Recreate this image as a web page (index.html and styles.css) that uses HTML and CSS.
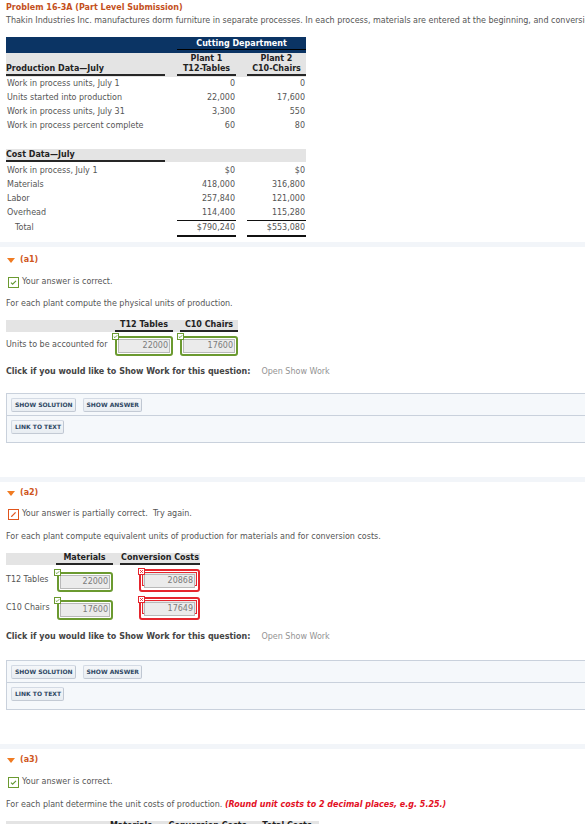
FILE: index.html
```html
<!DOCTYPE html>
<html>
<head>
<meta charset="utf-8">
<link rel="stylesheet" href="styles.css">
</head>
<body>
<div class="page">
  <div class="title">Problem 16-3A (Part Level Submission)</div>
  <div class="desc">Thakin Industries Inc. manufactures dorm furniture in separate processes. In each process, materials are entered at the beginning, and conversion costs are incurred uniformly. Production and cost data for the first month of operations are as follows.</div>

  <div class="data">
    <div class="r navy"><div class="dept">Cutting Department</div></div>
    <div class="r hdr">
      <div class="u b">Production Data—July</div><div></div>
      <div class="u b ctr">Plant 1<br>T12-Tables</div><div></div>
      <div class="u b ctr">Plant 2<br>C10-Chairs</div>
    </div>
    <div class="r row"><div>Work in process units, July 1</div><div></div><div class="num">0</div><div></div><div class="num">0</div></div>
    <div class="r row"><div>Units started into production</div><div></div><div class="num">22,000</div><div></div><div class="num">17,600</div></div>
    <div class="r row"><div>Work in process units, July 31</div><div></div><div class="num">3,300</div><div></div><div class="num">550</div></div>
    <div class="r row"><div>Work in process percent complete</div><div></div><div class="num">60</div><div></div><div class="num">80</div></div>

    <div class="r hdr2">
      <div class="u b">Cost Data—July</div><div></div><div></div><div></div><div></div>
    </div>
    <div class="r row"><div>Work in process, July 1</div><div></div><div class="num">$0</div><div></div><div class="num">$0</div></div>
    <div class="r row"><div>Materials</div><div></div><div class="num">418,000</div><div></div><div class="num">316,800</div></div>
    <div class="r row"><div>Labor</div><div></div><div class="num">257,840</div><div></div><div class="num">121,000</div></div>
    <div class="r row"><div>Overhead</div><div></div><div class="num">114,400</div><div></div><div class="num">115,280</div></div>
    <div class="r row total"><div class="tl">Total</div><div class="tl"></div><div class="num">$790,240</div><div class="tl"></div><div class="num">$553,080</div></div>
  </div>

  <div class="sep s1"></div>

  <!-- a1 -->
  <div class="part p1"><span class="tri"></span>(a1)</div>
  <div class="status st1">
    <svg class="ico" width="11" height="11" viewBox="0 0 11 11"><rect x="0.5" y="0.5" width="10" height="10" fill="#fff" stroke="#6b9a30"/><path d="M3 5.7 L4.6 7.2 L8 3.9" fill="none" stroke="#5f9630" stroke-width="1.1"/></svg>
    <span>Your answer is correct.</span>
  </div>
  <div class="prompt pr1">For each plant compute the physical units of production.</div>

  <div class="ans a1">
    <div class="ahdr g1">
      <div></div><div class="u b ctr">T12 Tables</div><div></div><div class="u b ctr">C10 Chairs</div>
    </div>
    <div class="arow g1 r1">
      <div class="alab">Units to be accounted for</div>
      <div class="inp ok w58"><svg class="mini" width="7" height="7" viewBox="0 0 7 7"><rect x="0.5" y="0.5" width="6" height="6" fill="#fff" stroke="#6b9a30"/><path d="M1.8 3.6 L2.9 4.6 L5.2 2.3" fill="none" stroke="#5f9630" stroke-width="0.9"/></svg><span>22000</span></div>
      <div></div>
      <div class="inp ok w58"><svg class="mini" width="7" height="7" viewBox="0 0 7 7"><rect x="0.5" y="0.5" width="6" height="6" fill="#fff" stroke="#6b9a30"/><path d="M1.8 3.6 L2.9 4.6 L5.2 2.3" fill="none" stroke="#5f9630" stroke-width="0.9"/></svg><span>17600</span></div>
    </div>
  </div>
  <div class="click c1"><b>Click if you would like to Show Work for this question:</b><span class="open">Open Show Work</span></div>

  <div class="box b1">
    <div class="brow top"><span class="btn">SHOW SOLUTION</span><span class="btn">SHOW ANSWER</span></div>
    <div class="brow bot"><span class="btn">LINK TO TEXT</span></div>
  </div>

  <div class="sep s2"></div>

  <!-- a2 -->
  <div class="part p2"><span class="tri"></span>(a2)</div>
  <div class="status st2">
    <svg class="ico" width="11" height="11" viewBox="0 0 11 11"><rect x="0.5" y="0.5" width="10" height="10" fill="#fff" stroke="#e0541c"/><path d="M3.4 7.6 L7.6 3.4" fill="none" stroke="#e0541c" stroke-width="1.3"/><path d="M3 8 L3.4 6.8 L4.2 7.6 Z" fill="#e0541c"/></svg>
    <span>Your answer is partially correct.&nbsp; Try again.</span>
  </div>
  <div class="prompt pr2">For each plant compute equivalent units of production for materials and for conversion costs.</div>

  <div class="ans a2">
    <div class="ahdr g2">
      <div></div><div class="u b ctr">Materials</div><div></div><div class="u b ctr">Conversion Costs</div>
    </div>
    <div class="arow g2 r2">
      <div class="alab2">T12 Tables</div>
      <div class="inp ok w56"><svg class="mini" width="7" height="7" viewBox="0 0 7 7"><rect x="0.5" y="0.5" width="6" height="6" fill="#fff" stroke="#6b9a30"/><path d="M1.8 3.6 L2.9 4.6 L5.2 2.3" fill="none" stroke="#5f9630" stroke-width="0.9"/></svg><span>22000</span></div>
      <div></div>
      <div class="inp bad"><svg class="mini" width="7" height="7" viewBox="0 0 7 7"><rect x="0.5" y="0.5" width="6" height="6" fill="#fff" stroke="#e5262e"/><path d="M2.2 2.2 L4.8 4.8 M4.8 2.2 L2.2 4.8" fill="none" stroke="#e5262e" stroke-width="1"/></svg><span class="in2"><span>20868</span></span></div>
    </div>
    <div class="arow g2 r2">
      <div class="alab2">C10 Chairs</div>
      <div class="inp ok w56"><svg class="mini" width="7" height="7" viewBox="0 0 7 7"><rect x="0.5" y="0.5" width="6" height="6" fill="#fff" stroke="#6b9a30"/><path d="M1.8 3.6 L2.9 4.6 L5.2 2.3" fill="none" stroke="#5f9630" stroke-width="0.9"/></svg><span>17600</span></div>
      <div></div>
      <div class="inp bad"><svg class="mini" width="7" height="7" viewBox="0 0 7 7"><rect x="0.5" y="0.5" width="6" height="6" fill="#fff" stroke="#e5262e"/><path d="M2.2 2.2 L4.8 4.8 M4.8 2.2 L2.2 4.8" fill="none" stroke="#e5262e" stroke-width="1"/></svg><span class="in2"><span>17649</span></span></div>
    </div>
  </div>
  <div class="click c2"><b>Click if you would like to Show Work for this question:</b><span class="open">Open Show Work</span></div>

  <div class="box">
    <div class="brow top"><span class="btn">SHOW SOLUTION</span><span class="btn">SHOW ANSWER</span></div>
    <div class="brow bot"><span class="btn">LINK TO TEXT</span></div>
  </div>

  <div class="sep s2"></div>

  <!-- a3 -->
  <div class="part p1"><span class="tri"></span>(a3)</div>
  <div class="status st1">
    <svg class="ico" width="11" height="11" viewBox="0 0 11 11"><rect x="0.5" y="0.5" width="10" height="10" fill="#fff" stroke="#6b9a30"/><path d="M3 5.7 L4.6 7.2 L8 3.9" fill="none" stroke="#5f9630" stroke-width="1.1"/></svg>
    <span>Your answer is correct.</span>
  </div>
  <div class="prompt pr2">For each plant determine the unit costs of production. <em class="note">(Round unit costs to 2 decimal places, e.g. 5.25.)</em></div>

  <div class="ans a3">
    <div class="ahdr g3">
      <div></div><div class="u b ctr">Materials</div><div></div><div class="u b ctr">Conversion Costs</div><div></div><div class="u b ctr">Total Costs</div>
    </div>
    <div class="arow g3 r2">
      <div class="alab2">T12 Tables</div><div></div><div></div><div></div><div></div><div></div>
    </div>
  </div>
</div>
</body>
</html>
```

FILE: styles.css
```css
html, body {
  margin: 0;
  padding: 0;
  overflow: hidden;
  background: #fff;
}
body {
  font-family: "DejaVu Sans", Verdana, sans-serif;
  font-size: 8px;
  color: #555;
}
.page {
  width: 820px;
  padding: 2px 6px 0;
}
.b { font-weight: bold; color: #222; }
.ctr { text-align: center; }

.title {
  line-height: 12px;
  font-weight: bold;
  color: #c4501c;
}
.desc {
  margin-top: 1px;
  line-height: 12px;
  white-space: nowrap;
  color: #555;
}

/* data table */
.data {
  margin-top: 10px;
  width: 300px;
}
.r {
  display: grid;
  grid-template-columns: 159px 12px 59px 11px 59px;
}
.navy {
  background: #0b3464;
  height: 16px;
}
.dept {
  grid-column: 3 / 6;
  padding-top: 1px;
  line-height: 11px;
  text-align: center;
  font-weight: bold;
  color: #fff;
  border-bottom: 1px solid #000;
  align-self: start;
}
.hdr {
  background: #e4e4e4;
  padding: 1px 0 1px;
  align-items: end;
}
.hdr > div, .hdr2 > div { line-height: 10px; }
.u { border-bottom: 2px solid #262626; }
.hdr2 {
  background: #e4e4e4;
  padding-top: 1px;
  margin-top: 16px;
  align-items: end;
}
.hdr2 + .row { margin-top: 2px; }
.row > div {
  line-height: 14px;
  white-space: nowrap;
}
.row > div:first-child { padding-left: 1px; }
.num { text-align: right; padding-right: 1px; }
.total > div {
  border-top: 1px solid #111;
  border-bottom: 2px solid #111;
}
.total > .tl { border-color: transparent; }
.total > .tl:first-child { padding-left: 9px; }

/* separators */
.sep {
  margin: 5px -6px 0;
  height: 5px;
  background: #f2f5f9;
}
.s2 { margin-top: 34px; }

.part {
  margin-top: 5px;
  line-height: 12px;
  font-weight: bold;
  color: #cf561c;
  display: flex;
  align-items: center;
  gap: 5px;
}
.s1 + .part { margin-top: 7px; }
.tri {
  margin-left: 1px;
  width: 0;
  height: 0;
  border-left: 4px solid transparent;
  border-right: 4px solid transparent;
  border-top: 5px solid #f07b22;
}

.status {
  display: flex;
  align-items: center;
  gap: 3px;
  line-height: 12px;
  padding-left: 2px;
  color: #555;
}
.st1 { margin-top: 10px; }
.st2 { margin-top: 9px; }
.ico { display: block; }

.prompt { line-height: 12px; white-space: nowrap; }
.pr1 { margin-top: 10px; }
.pr2 { margin-top: 11px; }
.note { color: #e3101f; font-weight: bold; }

/* answer grids */
.ans { margin-top: 10px; }
.a2, .a3 { margin-top: 10px; }
.ahdr {
  display: grid;
  background: #e4e4e4;
  align-items: end;
}
.ahdr > div { line-height: 10px; }
.arow { display: grid; }
.g1 { grid-template-columns: 109px 58px 7px 58px; width: 232px; }
.g2 { grid-template-columns: 50px 57px 7px 80px; width: 194px; }
.g3 { grid-template-columns: 96px 58px 7px 81px 7px 64px; width: 313px; }

.r1 { height: 26px; }
.r1 .inp { margin-top: 4px; align-self: start; }
.alab { padding-top: 7px; line-height: 12px; white-space: nowrap; }
.r2 { height: 28px; align-items: end; }
.r2 .inp { margin-bottom: 1px; }
.alab2 { align-self: start; padding-top: 9px; line-height: 12px; white-space: nowrap; }

.inp {
  position: relative;
  box-sizing: border-box;
  border-radius: 3px;
  background: #fff;
  padding: 1px;
  justify-self: end;
}
.inp span {
  display: block;
}
.inp > span, .in2 > span {
  box-sizing: border-box;
  height: 14px;
  line-height: 12px;
  border: 1px solid #b9b9b9;
  background: #ebebeb;
  text-align: right;
  padding-right: 1px;
  color: #7b7b7b;
}
.ok { border: 2px solid #6b9a30; height: 20px; }
.w58 { width: 58px; }
.w56 { width: 56px; }
.bad {
  width: 61px;
  height: 23px;
  border: 2px solid #e5262e;
  padding: 1px;
}
.bad .in2 {
  border: 1px solid #e5262e;
  padding: 1px;
}
.mini {
  position: absolute;
  left: -5px;
  top: -5px;
  display: block;
}
.bad .mini { left: -3px; top: -3px; }

.click {
  line-height: 12px;
  white-space: nowrap;
  color: #444;
}
.c1 { margin-top: 8px; }
.c2 { margin-top: 10px; }
.click b { color: #444; }
.open { margin-left: 11px; color: #939393; }

/* tool box */
.box {
  margin-top: 17px;
  border: 1px solid #c9d1dc;
  background: #f5f8fb;
  width: 700px;
}
.box.b1 { margin-top: 15px; }
.brow {
  display: flex;
  gap: 7px;
  padding-left: 4px;
}
.brow.top {
  padding-top: 4px;
  padding-bottom: 3px;
  border-bottom: 1px solid #c9d1dc;
}
.brow.bot {
  padding-top: 4px;
  padding-bottom: 8px;
}
.btn {
  display: block;
  height: 14px;
  box-sizing: border-box;
  line-height: 12px;
  padding: 0 2px 0 3px;
  border: 1px solid #d3dae4;
  border-right-color: #bfc7d2;
  border-bottom-color: #c3cad4;
  border-radius: 2px;
  background: linear-gradient(#f4f6f9, #e8edf2);
  font-size: 6px;
  font-weight: bold;
  color: #2e4864;
  white-space: nowrap;
}
.a3 { margin-bottom: 40px; }
```
